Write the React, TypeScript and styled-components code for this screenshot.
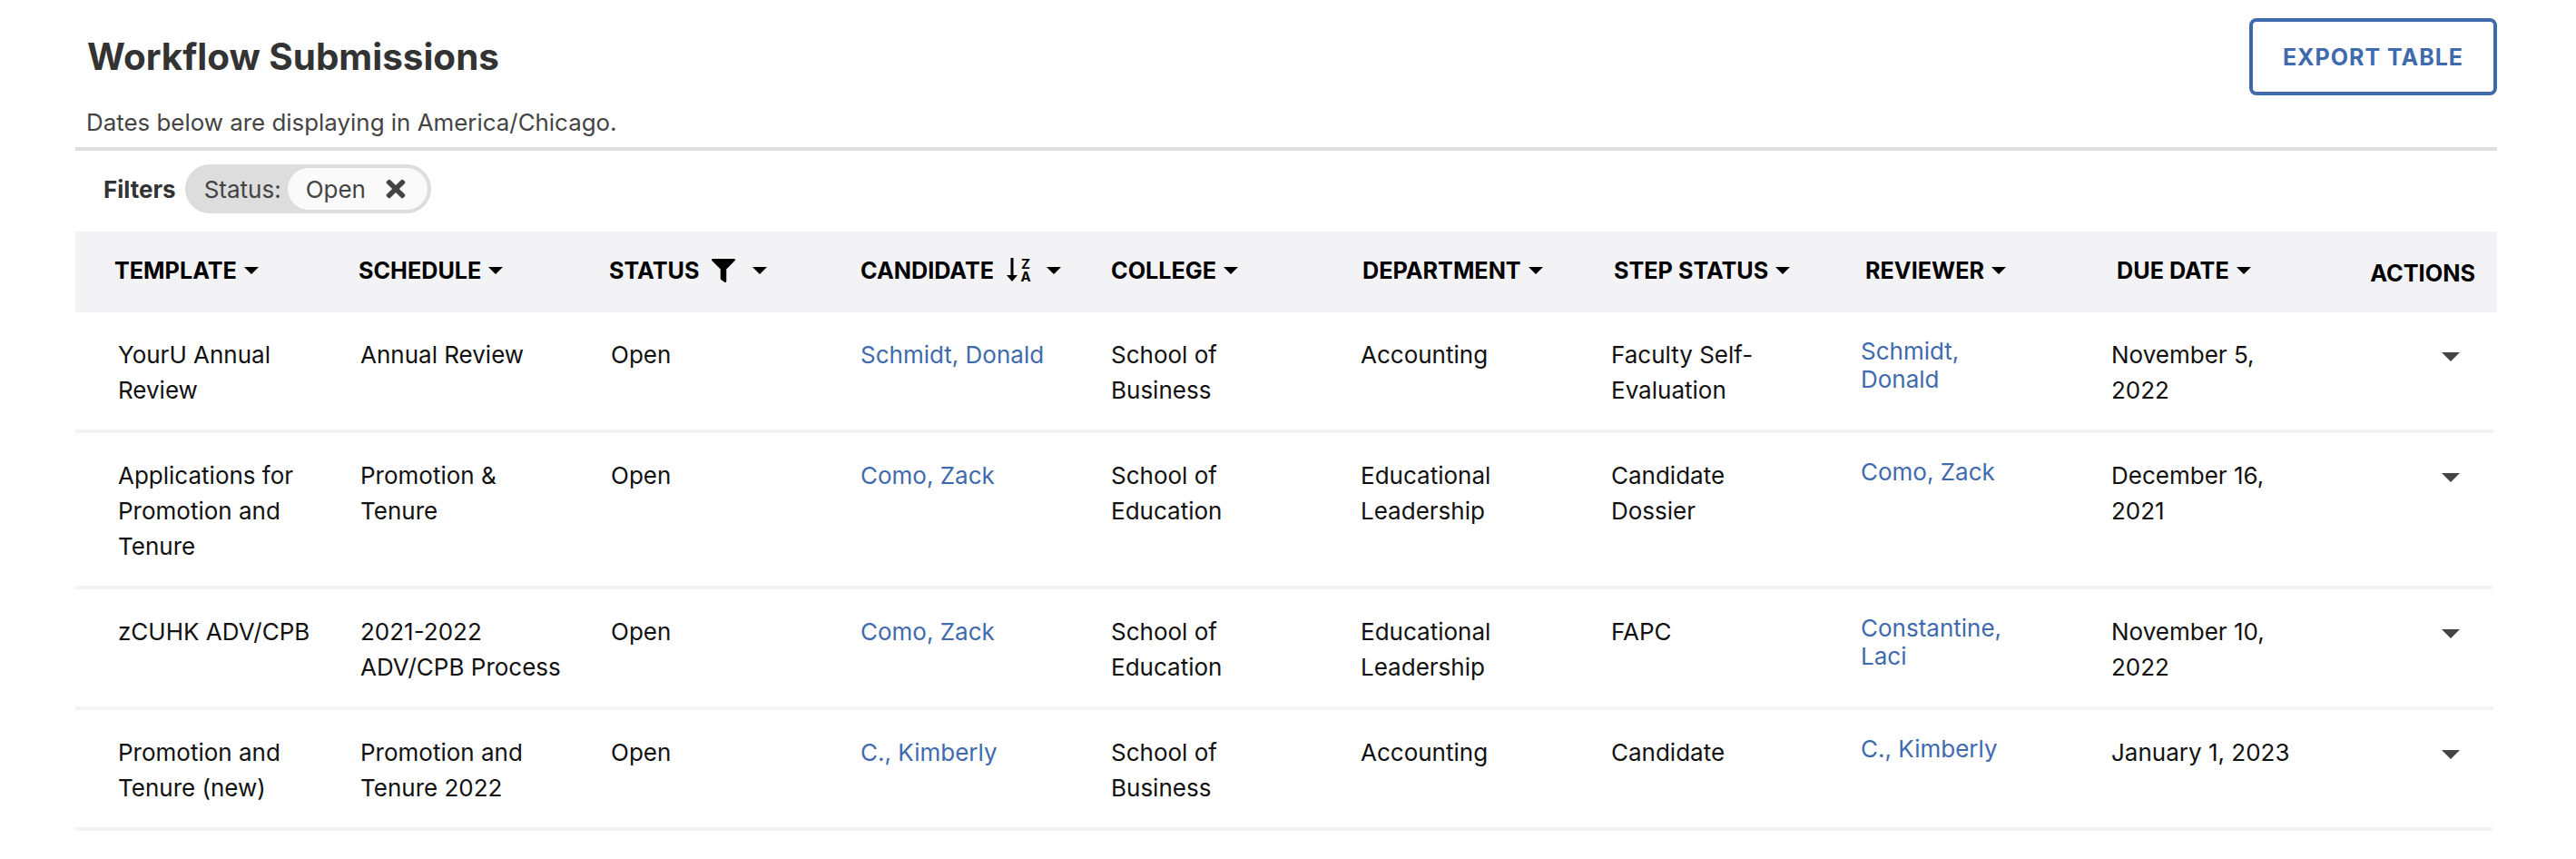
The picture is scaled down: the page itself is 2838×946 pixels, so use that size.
import React from "react";
import styled, { createGlobalStyle } from "styled-components";
import { FaFilter, FaTimes } from "react-icons/fa";

interface Submission {
  template: string;
  schedule: string;
  status: string;
  candidate: string;
  college: string;
  department: string;
  stepStatus: string;
  reviewer: string;
  dueDate: string;
}

const submissions: Submission[] = [
  {
    template: "YourU Annual Review",
    schedule: "Annual Review",
    status: "Open",
    candidate: "Schmidt, Donald",
    college: "School of Business",
    department: "Accounting",
    stepStatus: "Faculty Self-Evaluation",
    reviewer: "Schmidt, Donald",
    dueDate: "November 5, 2022",
  },
  {
    template: "Applications for Promotion and Tenure",
    schedule: "Promotion & Tenure",
    status: "Open",
    candidate: "Como, Zack",
    college: "School of Education",
    department: "Educational Leadership",
    stepStatus: "Candidate Dossier",
    reviewer: "Como, Zack",
    dueDate: "December 16, 2021",
  },
  {
    template: "zCUHK ADV/CPB",
    schedule: "2021-2022 ADV/CPB Process",
    status: "Open",
    candidate: "Como, Zack",
    college: "School of Education",
    department: "Educational Leadership",
    stepStatus: "FAPC",
    reviewer: "Constantine, Laci",
    dueDate: "November 10, 2022",
  },
  {
    template: "Promotion and Tenure (new)",
    schedule: "Promotion and Tenure 2022",
    status: "Open",
    candidate: "C., Kimberly",
    college: "School of Business",
    department: "Accounting",
    stepStatus: "Candidate",
    reviewer: "C., Kimberly",
    dueDate: "January 1, 2023",
  },
];

const GlobalStyle = createGlobalStyle`
  html, body {
    margin: 0;
    background: #fff;
    font-family: "Inter", "Liberation Sans", sans-serif;
    color: #111;
  }
`;

const Page = styled.div`
  padding: 20px 87px 0 83px;
`;

const TopBar = styled.div`
  align-items: center;
  display: flex;
  justify-content: space-between;
`;

const Title = styled.h1`
  color: #333;
  font-size: 40.4px;
  font-weight: 700;
  margin: 0 0 0 13px;
`;

const ExportButton = styled.button`
  background: #fff;
  border: 4px solid #3f6aad;
  border-radius: 8px;
  color: #3f6aad;
  font-family: inherit;
  font-size: 25px;
  font-weight: 700;
  height: 85px;
  letter-spacing: 1px;
  padding: 0;
  width: 273px;
`;

const Subtitle = styled.p`
  border-bottom: 4px solid #ddd;
  color: #444;
  font-size: 25.9px;
  line-height: 39px;
  margin: 10px 0 0;
  padding: 0 0 8px 12px;
`;

const FilterBar = styled.div`
  align-items: center;
  display: flex;
  gap: 10px;
  margin: 15px 0 20px;
  padding-left: 31px;
`;

const FilterLabel = styled.span`
  color: #333;
  font-size: 26px;
  font-weight: 700;
`;

const Chip = styled.div`
  align-items: center;
  background: #ddd;
  border: 4px solid #ddd;
  border-radius: 27px;
  box-sizing: border-box;
  color: #444;
  display: flex;
  font-size: 26px;
  height: 54px;
  padding-left: 17px;
`;

const ChipValue = styled.div`
  align-items: center;
  background: #fafafa;
  border-radius: 23px;
  display: flex;
  gap: 18px;
  height: 46px;
  margin-left: 7px;
  padding: 0 20px 0 20px;
`;

const HeaderRow = styled.div`
  align-items: center;
  background: #f3f3f5;
  display: grid;
  grid-template-columns: 269px 276px 277px 276px 277px 277px 277px 277px 279px 1fr;
  height: 89px;
  padding: 0 24px 0 43px;
`;

const HeaderCell = styled.div`
  align-items: center;
  color: #000;
  display: flex;
  font-size: 25.2px;
  font-weight: 700;
  height: 36px;
  margin-top: -4px;
`;

const ActionsHeader = styled(HeaderCell)`
  font-size: 25.3px;
  justify-content: flex-end;
  margin-top: 2px;
`;

const Caret = styled.span<{ $gap: number }>`
  border-left: 8px solid transparent;
  border-right: 8px solid transparent;
  border-top: 8px solid #000;
  margin-left: ${(props) => props.$gap}px;
`;

const HeaderIcon = styled.span`
  display: inline-flex;
  font-size: 26px;
  margin-left: 14px;
`;

const SortLetter = styled.text`
  fill: #000;
  font-family: "Inter", sans-serif;
  font-size: 15px;
  font-weight: 700;
  text-anchor: middle;
`;

const Row = styled.div`
  border-bottom: 4px solid #f3f3f3;
  display: grid;
  grid-template-columns: 267px 276px 275px 276px 275px 276px 275px 276px 276px 1fr;
  margin-right: 4px;
  padding: 27px 0 24px 47px;
`;

const Cell = styled.div`
  font-size: 26px;
  line-height: 39px;
  max-width: 224px;
`;

const CandidateLink = styled.a`
  color: #3f6aad;
  font-size: 26px;
  line-height: 39px;
`;

const ReviewerLink = styled.a`
  color: #3f6aad;
  display: block;
  font-size: 26px;
  line-height: 31px;
  max-width: 195px;
`;

const ActionCaret = styled.span`
  border-left: 10px solid transparent;
  border-right: 10px solid transparent;
  border-top: 10px solid #444;
  height: 0;
  justify-self: start;
  margin: 17px 0 0 88px;
  width: 0;
`;

const SortIcon = () => (
  <svg width="28" height="36" viewBox="0 -4 28 36">
    <path d="M4.5 0h3v19H12l-6 7-6-7h4.5z" fill="#000" />
    <SortLetter x="21" y="12">
      Z
    </SortLetter>
    <SortLetter x="21" y="26">
      A
    </SortLetter>
  </svg>
);

const App = () => (
  <Page>
    <GlobalStyle />
    <TopBar>
      <Title>Workflow Submissions</Title>
      <ExportButton>EXPORT TABLE</ExportButton>
    </TopBar>
    <Subtitle>Dates below are displaying in America/Chicago.</Subtitle>
    <FilterBar>
      <FilterLabel>Filters</FilterLabel>
      <Chip>
        Status:
        <ChipValue>
          Open
          <FaTimes size={30} />
        </ChipValue>
      </Chip>
    </FilterBar>
    <HeaderRow>
      <HeaderCell>
        TEMPLATE
        <Caret $gap={8} />
      </HeaderCell>
      <HeaderCell>
        SCHEDULE
        <Caret $gap={8} />
      </HeaderCell>
      <HeaderCell>
        STATUS
        <HeaderIcon>
          <FaFilter />
        </HeaderIcon>
        <Caret $gap={19} />
      </HeaderCell>
      <HeaderCell>
        CANDIDATE
        <HeaderIcon>
          <SortIcon />
        </HeaderIcon>
        <Caret $gap={16} />
      </HeaderCell>
      <HeaderCell>
        COLLEGE
        <Caret $gap={8} />
      </HeaderCell>
      <HeaderCell>
        DEPARTMENT
        <Caret $gap={8} />
      </HeaderCell>
      <HeaderCell>
        STEP STATUS
        <Caret $gap={8} />
      </HeaderCell>
      <HeaderCell>
        REVIEWER
        <Caret $gap={8} />
      </HeaderCell>
      <HeaderCell>
        DUE DATE
        <Caret $gap={8} />
      </HeaderCell>
      <ActionsHeader>ACTIONS</ActionsHeader>
    </HeaderRow>
    {submissions.map((item, i) => (
      <Row key={i}>
        <Cell>{item.template}</Cell>
        <Cell>{item.schedule}</Cell>
        <Cell>{item.status}</Cell>
        <Cell>
          <CandidateLink>{item.candidate}</CandidateLink>
        </Cell>
        <Cell>{item.college}</Cell>
        <Cell>{item.department}</Cell>
        <Cell>{item.stepStatus}</Cell>
        <Cell>
          <ReviewerLink>{item.reviewer}</ReviewerLink>
        </Cell>
        <Cell>{item.dueDate}</Cell>
        <ActionCaret />
      </Row>
    ))}
  </Page>
);

export default App;
